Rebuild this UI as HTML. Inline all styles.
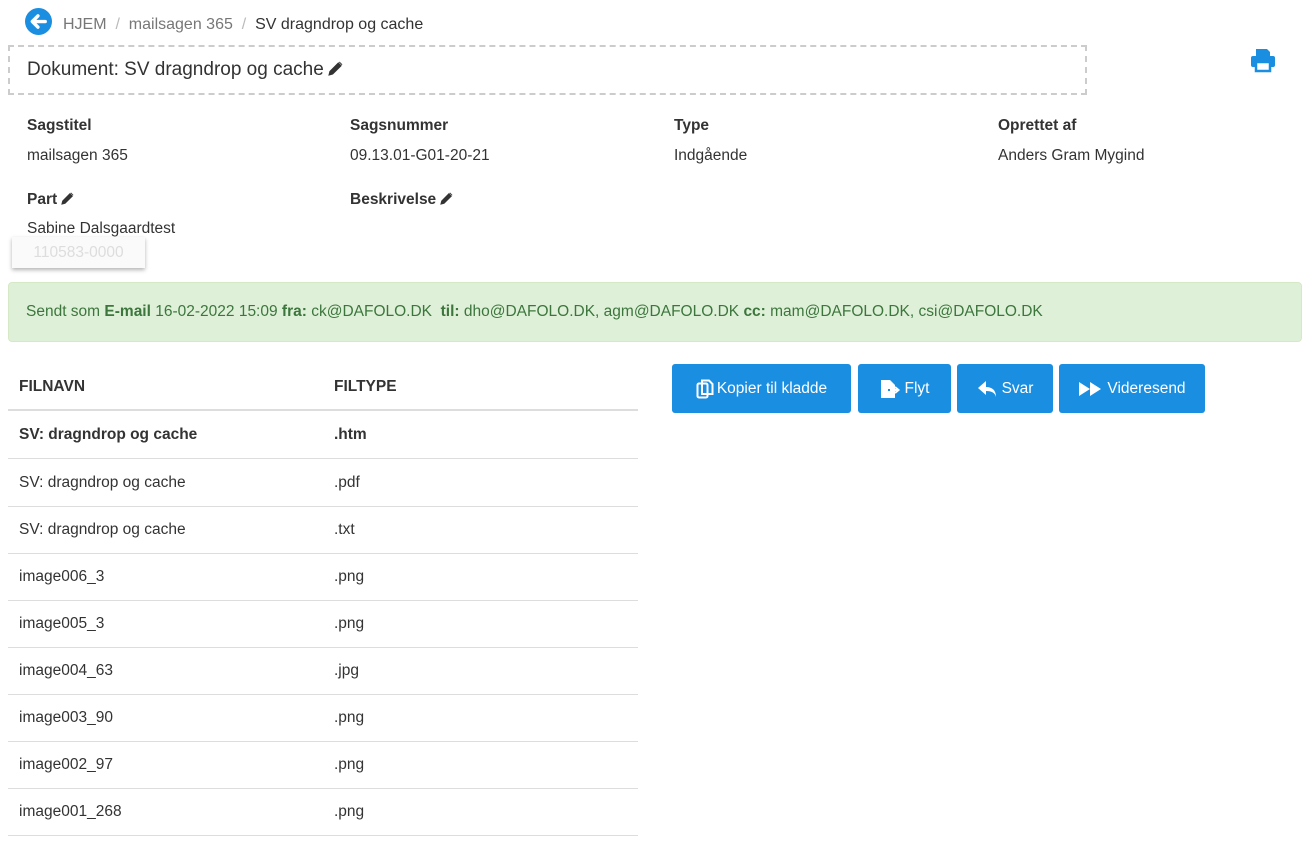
<!DOCTYPE html>
<html><head><meta charset="utf-8"><style>
body{margin:0;width:1312px;height:841px;background:#fff;font-family:"Liberation Sans",sans-serif;color:#333;font-size:15.5px;position:relative;overflow:hidden}
.a{position:absolute;white-space:nowrap}
.b{font-weight:bold}
.row{position:absolute;left:8px;width:630px;height:47px;border-bottom:1px solid #ddd}
.row span{position:absolute;top:15px}
.btn{position:absolute;top:364px;height:49px;background:#1a8ee1;border-radius:3px;color:#fff;font-size:15.5px;display:flex;align-items:center;justify-content:center;gap:3px}
.pen{display:inline-block;vertical-align:-1px;margin-left:4px}
</style></head><body>
<svg class="a" style="left:25px;top:8px" width="27" height="27" viewBox="0 0 24 24"><circle cx="12" cy="12" r="12" fill="#1a8ee1"/><path d="M18 12H7M11.5 7L6.5 12l5 5" stroke="#fff" stroke-width="3" fill="none" stroke-linecap="round" stroke-linejoin="round"/></svg>
<div class="a" style="left:63px;top:16px;color:#777;font-size:16px">HJEM <span style="color:#bbb">&nbsp;/&nbsp;</span> mailsagen 365 <span style="color:#bbb">&nbsp;/&nbsp;</span> <span style="color:#333">SV dragndrop og cache</span></div>
<div class="a" style="left:8px;top:45px;width:1075px;height:46px;border:2px dashed #ccc"></div>
<div class="a" style="left:27px;top:59px;font-size:19px">Dokument: SV dragndrop og cache<svg class="pen" width="15" height="15" viewBox="0 0 16 16"><path d="M1 15l1-4 9-9 3 3-9 9zM12 1l3 3" fill="#333" stroke="#333"/></svg></div>
<svg class="a" style="left:1249px;top:47px" width="28" height="26" viewBox="0 0 28 26"><path d="M7 2h11l3 3v4H7z" fill="#1a8ee1"/><rect x="2" y="9" width="24" height="11" rx="2" fill="#1a8ee1"/><rect x="7" y="15" width="14" height="9" fill="#fff" stroke="#1a8ee1" stroke-width="2.5"/></svg>
<div class="a b" style="left:27px;top:117px">Sagstitel</div><div class="a" style="left:27px;top:147px">mailsagen 365</div>
<div class="a b" style="left:350px;top:117px">Sagsnummer</div><div class="a" style="left:350px;top:147px">09.13.01-G01-20-21</div>
<div class="a b" style="left:674px;top:117px">Type</div><div class="a" style="left:674px;top:147px">Indgående</div>
<div class="a b" style="left:998px;top:117px">Oprettet af</div><div class="a" style="left:998px;top:147px">Anders Gram Mygind</div>
<div class="a b" style="left:27px;top:191px">Part<svg class="pen" width="13" height="13" viewBox="0 0 16 16"><path d="M1 15l1-4 9-9 3 3-9 9zM12 1l3 3" fill="#333" stroke="#333"/></svg></div><div class="a" style="left:27px;top:220px">Sabine Dalsgaardtest</div>
<div class="a b" style="left:350px;top:191px">Beskrivelse<svg class="pen" width="13" height="13" viewBox="0 0 16 16"><path d="M1 15l1-4 9-9 3 3-9 9zM12 1l3 3" fill="#333" stroke="#333"/></svg></div>
<div class="a" style="left:12px;top:237px;width:133px;height:31px;background:#fafafa;box-shadow:0 2px 4px rgba(0,0,0,.3);color:#ddd;text-align:center;line-height:31px">110583-0000</div>
<div class="a" style="left:8px;top:282px;width:1292px;height:58px;background:#dff0d8;border:1px solid #d6e9c6;border-radius:4px;color:#3c763d;line-height:58px;font-size:15.5px;text-indent:17px">Sendt som <b>E-mail</b> 16-02-2022 15:09 <b>fra:</b> ck@DAFOLO.DK &nbsp;<b>til:</b> dho@DAFOLO.DK, agm@DAFOLO.DK <b>cc:</b> mam@DAFOLO.DK, csi@DAFOLO.DK</div>
<div class="row" style="top:364px;height:45px;border-bottom:2px solid #ddd"><span class="b" style="left:11px;top:14px">FILNAVN</span><span class="b" style="left:326px;top:14px">FILTYPE</span></div>
<div class="row" style="top:411px"><span class="b" style="left:11px">SV: dragndrop og cache</span><span class="b" style="left:326px">.htm</span></div>
<div class="row" style="top:459px"><span style="left:11px">SV: dragndrop og cache</span><span style="left:326px">.pdf</span></div>
<div class="row" style="top:506px"><span style="left:11px">SV: dragndrop og cache</span><span style="left:326px">.txt</span></div>
<div class="row" style="top:553px"><span style="left:11px">image006_3</span><span style="left:326px">.png</span></div>
<div class="row" style="top:600px"><span style="left:11px">image005_3</span><span style="left:326px">.png</span></div>
<div class="row" style="top:647px"><span style="left:11px">image004_63</span><span style="left:326px">.jpg</span></div>
<div class="row" style="top:694px"><span style="left:11px">image003_90</span><span style="left:326px">.png</span></div>
<div class="row" style="top:741px"><span style="left:11px">image002_97</span><span style="left:326px">.png</span></div>
<div class="row" style="top:788px"><span style="left:11px">image001_268</span><span style="left:326px">.png</span></div>
<div class="btn" style="left:672px;width:179px"><svg width="18" height="20" viewBox="0 0 18 20"><rect x="1.5" y="4.5" width="10" height="14" rx="1.5" fill="none" stroke="#fff" stroke-width="2"/><path d="M6 1.5h7l3.5 3.5v10H6z" fill="none" stroke="#fff" stroke-width="2"/></svg>Kopier til kladde</div>
<div class="btn" style="left:858px;width:93px"><svg width="22" height="20" viewBox="0 0 22 20"><path d="M1 1h9l5 5v4H8v2h7v7H1z" fill="#fff"/><path d="M10 11h8M15 8l3.5 3-3.5 3" stroke="#fff" stroke-width="2" fill="none"/></svg>Flyt</div>
<div class="btn" style="left:957px;width:96px"><svg width="22" height="18" viewBox="0 0 22 18"><path d="M9 1L1 8l8 7v-4c6 0 9 2 10 6 0-7-4-10-10-10z" fill="#fff"/></svg>Svar</div>
<div class="btn" style="left:1059px;width:146px"><svg width="26" height="16" viewBox="0 0 26 16"><path d="M1 1l11 7-11 7zM12 1l11 7-11 7z" fill="#fff"/></svg>Videresend</div>
</body></html>
